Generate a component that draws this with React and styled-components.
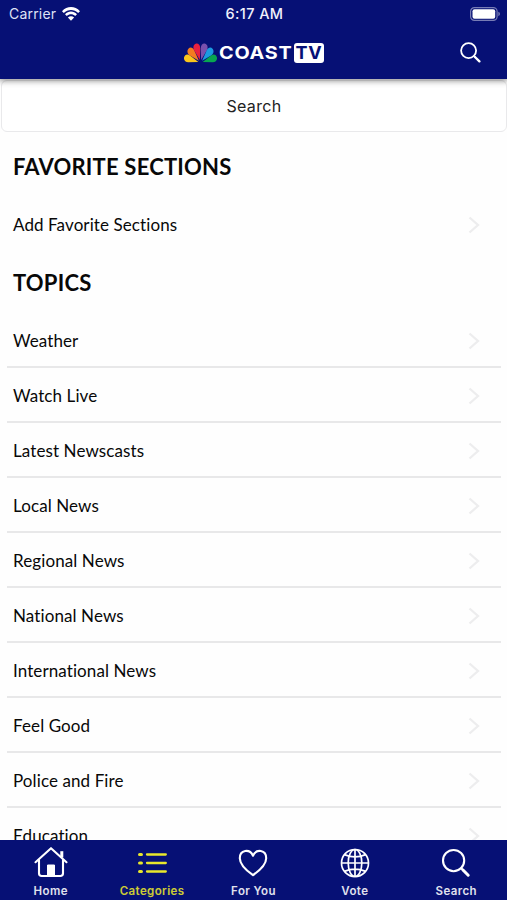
import React from 'react'
import styled, { createGlobalStyle } from 'styled-components'

const navy = '#061075'

const GlobalStyle = createGlobalStyle`
  * {
    box-sizing: border-box;
  }
  body {
    margin: 0;
    background: #fff;
    font-family: Inter, "Liberation Sans", sans-serif;
  }
`

const Screen = styled.div`
  height: 900px;
  width: 507px;
  display: flex;
  flex-direction: column;
  overflow: hidden;
  background: #fefefe;
`

const Header = styled.header`
  position: relative;
  z-index: 1;
  flex: 0 0 79px;
  background: ${navy};
  color: #fff;
  box-shadow: 0 1px 6px 1px rgba(0, 0, 0, 0.42);
`

const StatusBar = styled.div`
  height: 27px;
  display: grid;
  grid-template-columns: 1fr auto 1fr;
  align-items: center;
  padding: 0 7px 0 9px;
  font-size: 14px;
`

const Carrier = styled.div`
  display: flex;
  align-items: center;
  gap: 6px;
  color: #dfe2f5;
  letter-spacing: 0.2px;
`

const Clock = styled.div`
  font-weight: 500;
  font-size: 14.5px;
  letter-spacing: 0.4px;
  color: #f0f1fc;
`

const Battery = styled.div`
  display: flex;
  justify-content: flex-end;
`

const TitleBar = styled.div`
  height: 51px;
  display: grid;
  grid-template-columns: 1fr auto 1fr;
  align-items: center;
  padding: 0 26px 0 27px;
`

const Logo = styled.div`
  grid-column: 2;
  display: flex;
  align-items: center;
`

const LogoName = styled.span`
  width: 75px;
  margin-left: 2px;
  font-size: 17.5px;
  line-height: 20px;
  font-weight: 700;
  letter-spacing: 0.7px;
  transform: scaleX(1.13);
  transform-origin: left;
`

const LogoBadge = styled.span`
  width: 30px;
  height: 20px;
  border-radius: 3px;
  background: #fff;
  color: ${navy};
  font-size: 18px;
  line-height: 20px;
  font-weight: 700;
  text-align: center;
  letter-spacing: 0.8px;
`

const SearchButton = styled.button`
  justify-self: end;
  display: flex;
  padding: 0;
  border: 0;
  background: transparent;
  color: #fff;
`

const Content = styled.main`
  flex: 1;
  min-height: 0;
  overflow: hidden;
`

const SearchField = styled.div`
  height: 52px;
  margin: 1px 0 0 1px;
  display: flex;
  align-items: center;
  justify-content: center;
  border: 1px solid #e9e9eb;
  border-radius: 6px;
  background: #fff;
  color: #222;
  font-size: 16px;
  letter-spacing: 0.35px;
`

const SectionTitle = styled.h2`
  height: ${props => (props.$first ? '66px' : '60px')};
  margin: 0;
  padding: ${props => (props.$first ? '21px' : '16px')} 0 0 13px;
  color: #080808;
  font-family: Lato, sans-serif;
  font-size: 22px;
  line-height: 28px;
  font-weight: 700;
  letter-spacing: 0.2px;
`

const Row = styled.div`
  height: 55px;
  margin: 0 6px 0 7px;
  padding: ${props => (props.$plain ? '0' : '2px')} 21px 0 6px;
  display: flex;
  align-items: center;
  justify-content: space-between;
  border-bottom: 2px solid ${props => (props.$plain ? 'transparent' : '#e8e8e9')};
  color: #080808;
  font-family: Lato, sans-serif;
  font-size: 17px;
  line-height: 22px;
  letter-spacing: 0.1px;
`

const TabBar = styled.nav`
  flex: 0 0 60px;
  display: grid;
  grid-template-columns: repeat(5, 1fr);
  background: ${navy};
`

const Tab = styled.div`
  display: flex;
  flex-direction: column;
  align-items: center;
  padding-top: 5px;
  color: ${props => (props.$active ? '#e9e72c' : '#fff')};
`

const TabLabel = styled.span`
  margin-top: 5px;
  font-size: 11.5px;
  line-height: 15px;
  font-weight: 600;
  letter-spacing: 0.4px;
  opacity: 0.88;
`

const WifiIcon = () => (
  <svg width="18" height="14" viewBox="0 0 18 14" fill="#fff">
    <path d="M0 4.2C5-1.4 13-1.4 18 4.2L16.2 6.1C12.2 1.8 5.8 1.8 1.8 6.1Z" />
    <path d="M3 7.3C6.4 3.7 11.6 3.7 15 7.3L13.2 9.1C10.8 6.7 7.2 6.7 4.8 9.1Z" />
    <path d="M5.9 10.4C7.7 8.7 10.3 8.7 12.1 10.4L9 13.7Z" />
  </svg>
)

const BatteryIcon = () => (
  <svg width="30" height="14" viewBox="0 0 30 14">
    <rect x="0.6" y="0.6" width="26.5" height="12.8" rx="3.8" fill="none" stroke="#777cb5" strokeWidth="1.2" />
    <rect x="2.5" y="2.2" width="22.7" height="9.6" rx="2" fill="#fff" />
    <path d="M28.3 4.8Q30 5.4 30 7Q30 8.6 28.3 9.2Z" fill="#777cb5" />
  </svg>
)

const feathers = [
  { angle: -74, color: '#fbc51b' },
  { angle: -45, color: '#f47b20' },
  { angle: -16, color: '#e9213f' },
  { angle: 16, color: '#7951ae' },
  { angle: 45, color: '#1c9be0' },
  { angle: 74, color: '#08a650' },
]

const Peacock = () => (
  <svg width="33" height="20" viewBox="0 0 33 20">
    <g transform="translate(16.5 19.6) scale(0.87 1)">
      {feathers.map(feather => (
        <path
          key={feather.angle}
          d="M0-2.6L-3.6-13.6C-4.6-17.2-2.6-19.6 0-19.6C2.6-19.6 4.6-17.2 3.6-13.6Z"
          fill={feather.color}
          transform={`rotate(${feather.angle})`}
        />
      ))}
    </g>
  </svg>
)

const Magnifier = ({ size, stroke = 2 }) => (
  <svg width={size} height={size} viewBox="0 0 21 21" fill="none" stroke="currentColor" strokeLinecap="round">
    <circle cx="8.6" cy="8.6" r="7.5" strokeWidth={stroke} />
    <path d="M14 14L15.3 15.3" strokeWidth={stroke} />
    <path d="M15.2 15.2L19.4 19.4" strokeWidth={stroke + 0.5} />
  </svg>
)

const Chevron = () => (
  <svg width="12" height="18" viewBox="0 0 12 18" fill="none" stroke="#ededee" strokeWidth="2.3">
    <path d="M1.5 1.5L10 9L1.5 16.5" />
  </svg>
)

const HomeIcon = () => (
  <svg width="34" height="34" viewBox="0 0 34 34" fill="none" stroke="currentColor" strokeWidth="2.1" strokeLinecap="round" strokeLinejoin="round">
    <path d="M1.5 17.2L17 3.2L32.5 17.2" />
    <path d="M27.8 12.5V6.2" strokeWidth="3" strokeLinecap="butt" />
    <path d="M5 15.4V28.3Q5 31 7.7 31H26.3Q29 31 29 28.3V15.4" />
    <path d="M13.5 30.5V20H20.5V30.5Z" fill="currentColor" strokeWidth="1" />
  </svg>
)

const ListIcon = () => (
  <svg width="34" height="34" viewBox="0 0 34 34" stroke="currentColor" strokeLinecap="round">
    <path d="M4.6 9.5H6.4M4.6 18H6.4M4.6 26.5H6.4" strokeWidth="3.2" />
    <path d="M12 9.5H30.8M12 18H30.8M12 26.5H30.8" strokeWidth="2.3" />
  </svg>
)

const HeartIcon = () => (
  <svg width="34" height="34" viewBox="0 0 34 34" fill="none" stroke="currentColor" strokeWidth="2.1" strokeLinejoin="round">
    <path d="M17 30.2C13.2 27.5 3.8 20.6 3.8 13.2C3.8 4.6 13.7 3.5 17 10.7C20.3 3.5 30.2 4.6 30.2 13.2C30.2 20.6 20.8 27.5 17 30.2Z" />
  </svg>
)

const GlobeIcon = () => (
  <svg width="34" height="34" viewBox="0 0 34 34" fill="none" stroke="currentColor" strokeWidth="1.7">
    <circle cx="17" cy="18" r="13.5" />
    <ellipse cx="17" cy="18" rx="6.8" ry="13.5" />
    <path d="M17 4.5V31.5M3.5 18H30.5M6.4 9.6Q17 14.3 27.6 9.6M6.4 26.4Q17 21.7 27.6 26.4" />
  </svg>
)

const SearchTabIcon = () => (
  <svg width="34" height="34" viewBox="0 0 34 34" fill="none" stroke="currentColor" strokeLinecap="round">
    <circle cx="14.6" cy="15.6" r="10.6" strokeWidth="2.1" />
    <path d="M22.2 23.2L24 25" strokeWidth="2.2" />
    <path d="M24 25L29.2 30.2" strokeWidth="3" />
  </svg>
)

const topics = [
  'Weather',
  'Watch Live',
  'Latest Newscasts',
  'Local News',
  'Regional News',
  'National News',
  'International News',
  'Feel Good',
  'Police and Fire',
  'Education',
]

const tabs = [
  { label: 'Home', icon: <HomeIcon /> },
  { label: 'Categories', icon: <ListIcon />, active: true },
  { label: 'For You', icon: <HeartIcon /> },
  { label: 'Vote', icon: <GlobeIcon /> },
  { label: 'Search', icon: <SearchTabIcon /> },
]

const App = () => {
  return (
    <>
      <GlobalStyle />
      <Screen>
        <Header>
          <StatusBar>
            <Carrier>Carrier <WifiIcon /></Carrier>
            <Clock>6:17 AM</Clock>
            <Battery><BatteryIcon /></Battery>
          </StatusBar>
          <TitleBar>
            <Logo>
              <Peacock />
              <LogoName>COAST</LogoName>
              <LogoBadge>TV</LogoBadge>
            </Logo>
            <SearchButton aria-label="Search"><Magnifier size={21} stroke={1.8} /></SearchButton>
          </TitleBar>
        </Header>

        <Content>
          <SearchField>Search</SearchField>
          <SectionTitle $first>FAVORITE SECTIONS</SectionTitle>
          <Row $plain>
            <span>Add Favorite Sections</span>
            <Chevron />
          </Row>
          <SectionTitle>TOPICS</SectionTitle>
          {topics.map(topic => (
            <Row key={topic}>
              <span>{topic}</span>
              <Chevron />
            </Row>
          ))}
        </Content>

        <TabBar>
          {tabs.map(tab => (
            <Tab key={tab.label} $active={tab.active}>
              {tab.icon}
              <TabLabel>{tab.label}</TabLabel>
            </Tab>
          ))}
        </TabBar>
      </Screen>
    </>
  )
}

export default App
